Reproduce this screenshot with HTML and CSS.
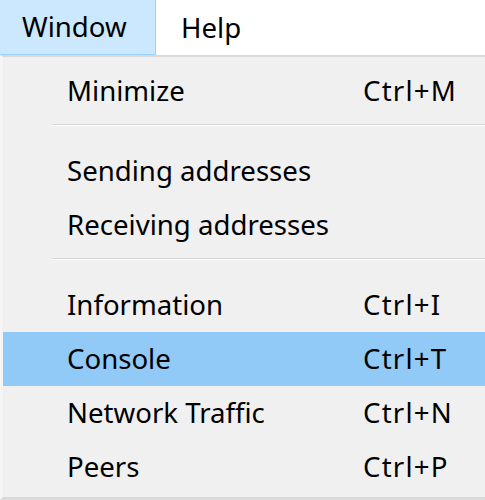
FILE: index.html
```html
<!DOCTYPE html>
<html>
<head>
<meta charset="utf-8">
<link rel="stylesheet" href="styles.css">
</head>
<body>
<div class="menubar">
  <div class="bar-item active">Window</div>
  <div class="bar-item">Help</div>
</div>
<div class="menu">
  <div class="row"><span class="label">Minimize</span><span class="key">Ctrl+M</span></div>
  <div class="sep"></div>
  <div class="row"><span class="label">Sending addresses</span></div>
  <div class="row"><span class="label">Receiving addresses</span></div>
  <div class="sep"></div>
  <div class="row"><span class="label">Information</span><span class="key">Ctrl+I</span></div>
  <div class="row selected"><span class="label">Console</span><span class="key">Ctrl+T</span></div>
  <div class="row"><span class="label">Network Traffic</span><span class="key">Ctrl+N</span></div>
  <div class="row"><span class="label">Peers</span><span class="key">Ctrl+P</span></div>
</div>
</body>
</html>
```
FILE: styles.css
```css
html, body {
  margin: 0;
  padding: 0;
  background: #ffffff;
  font-family: "Noto Sans", "Open Sans", sans-serif;
  font-size: 27.6px;
  color: #000;
}
.menubar {
  display: flex;
  height: 55px;
  background: #fff;
}
.bar-item {
  box-sizing: border-box;
  height: 55px;
  display: flex;
  align-items: center;
  padding: 0 0 2px 0;
}
.bar-item.active {
  width: 156px;
  padding-left: 22px;
  background: #cce8ff;
  border-right: 1px solid #99d1ff;
  border-bottom: 1px solid #99d1ff;
}
.bar-item:not(.active) {
  padding-left: 25px;
}
.menu {
  box-sizing: border-box;
  height: 445px;
  background: #f0f0f0;
  border-top: 2px solid #d9d9d9;
  border-left: 3px solid #f5f5f5;
  border-bottom: 3px solid #d9d9d9;
  padding-top: 7px;
}
.row {
  display: flex;
  align-items: center;
  height: 54px;
  padding-left: 64px;
  padding-bottom: 3px;
  box-sizing: border-box;
}
.row.selected {
  background: #91c9f7;
}
.label {
  width: 296px;
}
.key {
  letter-spacing: 1.2px;
}
.sep {
  height: 26px;
  box-sizing: border-box;
  padding-top: 6px;
  margin-left: 49px;
}
.sep::before {
  content: "";
  display: block;
  height: 1px;
  background: #d7d7d7;
  border-bottom: 1px solid #ffffff;
}
```
